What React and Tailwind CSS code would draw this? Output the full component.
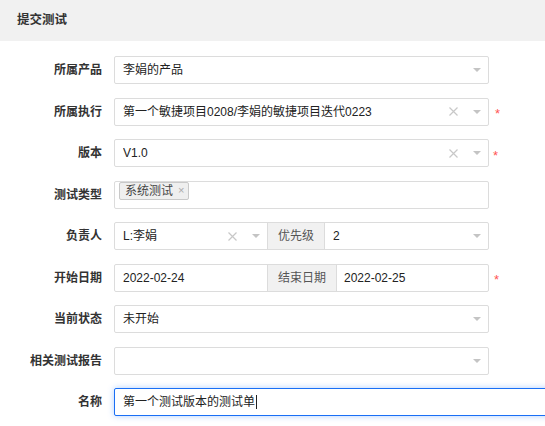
import React from "react";

const font = { fontFamily: '"Liberation Sans", "Noto Sans CJK SC", sans-serif' };

function Caret() {
  return (
    <svg width="8" height="4" viewBox="0 0 8 4" className="shrink-0">
      <path d="M0 0 H8 L4 4 Z" fill="#c4c4c4" />
    </svg>
  );
}

function Clear() {
  return (
    <svg width="9" height="9" viewBox="0 0 9 9" className="shrink-0">
      <path d="M0.5 0.5 L8.5 8.5 M8.5 0.5 L0.5 8.5" stroke="#c8c8c8" strokeWidth="1.2" />
    </svg>
  );
}

function Star({ className = "" }) {
  return <span className={`text-[13px] leading-none text-[#f55] ${className}`}>*</span>;
}

function SelectBody({ value, clear, caret = true }) {
  return (
    <div className="flex h-full min-w-0 flex-1 items-center pl-[8px] pr-[7px]">
      <span className="flex-1 truncate text-[12px] text-[#222]">{value}</span>
      {clear && (
        <span className="mr-[15px] flex items-center">
          <Clear />
        </span>
      )}
      {caret && <Caret />}
    </div>
  );
}

function Row({ label, children, star, starGap = "ml-[5px]" }) {
  return (
    <div className="flex h-[28px] items-center">
      <div className="w-[102px] shrink-0 text-right text-[12px] font-bold text-[#333]">{label}</div>
      <div className="ml-[12px] flex h-full w-[375px] shrink-0">{children}</div>
      {star && <Star className={starGap + " mt-[4px]"} />}
    </div>
  );
}

const box = "flex h-full w-full items-stretch rounded-[2px] border border-[#dcdcdc] bg-white";

function Addon({ text, width }) {
  return (
    <div
      className={`flex h-full shrink-0 items-center justify-center border-x border-[#dcdcdc] bg-[#f1f1f1] text-[12px] text-[#555] ${width}`}
    >
      {text}
    </div>
  );
}

export default function App() {
  return (
    <div className="h-[426px] w-[545px] overflow-hidden bg-white" style={font}>
      <div className="flex h-[41px] items-center bg-[#f1f1f1] pl-[17px] text-[12.5px] font-bold text-[#333]">
        提交测试
      </div>

      <div className="flex flex-col gap-[13.5px] pt-[15px]">
        <Row label="所属产品">
          <div className={box}>
            <SelectBody value="李娟的产品" />
          </div>
        </Row>

        <Row label="所属执行" star starGap="ml-[6px]">
          <div className={box}>
            <SelectBody value="第一个敏捷项目0208/李娟的敏捷项目迭代0223" clear />
          </div>
        </Row>

        <Row label="版本" star starGap="ml-[4px]">
          <div className={box}>
            <SelectBody value="V1.0" clear />
          </div>
        </Row>

        <Row label="测试类型">
          <div className={box + " items-center pl-[4px]"}>
            <span className="flex h-[18px] items-center rounded-[2px] border border-[#c9c9c9] bg-[#efefef] pl-[5px] pr-[4px] text-[12px] text-[#444]">
              系统测试
              <span className="ml-[5px] text-[11px] leading-none text-[#aaa]">×</span>
            </span>
          </div>
        </Row>

        <Row label="负责人">
          <div className={box}>
            <div className="flex h-full w-[152px] shrink-0">
              <SelectBody value="L:李娟" clear />
            </div>
            <Addon text="优先级" width="w-[58px]" />
            <SelectBody value="2" />
          </div>
        </Row>

        <Row label="开始日期" star starGap="ml-[5px]">
          <div className={box}>
            <div className="flex h-full w-[152px] shrink-0 items-center pl-[8px] text-[12px] text-[#222]">
              2022-02-24
            </div>
            <Addon text="结束日期" width="w-[70px]" />
            <div className="flex h-full flex-1 items-center pl-[7px] text-[12px] text-[#222]">2022-02-25</div>
          </div>
        </Row>

        <Row label="当前状态">
          <div className={box}>
            <SelectBody value="未开始" />
          </div>
        </Row>

        <Row label="相关测试报告">
          <div className={box}>
            <SelectBody value="" />
          </div>
        </Row>

        <div className="flex h-[28px] items-center">
          <div className="w-[102px] shrink-0 text-right text-[12px] font-bold text-[#333]">名称</div>
          <div className="ml-[12px] flex h-full w-[460px] shrink-0 items-center rounded-[2px] border border-[#1a6ff5] bg-white pl-[8px] text-[12px] text-[#222] shadow-[0_0_6px_rgba(30,120,255,0.35)]">
            第一个测试版本的测试单
            <span className="ml-[1px] inline-block h-[14px] w-px bg-[#222]" />
          </div>
        </div>
      </div>
    </div>
  );
}
